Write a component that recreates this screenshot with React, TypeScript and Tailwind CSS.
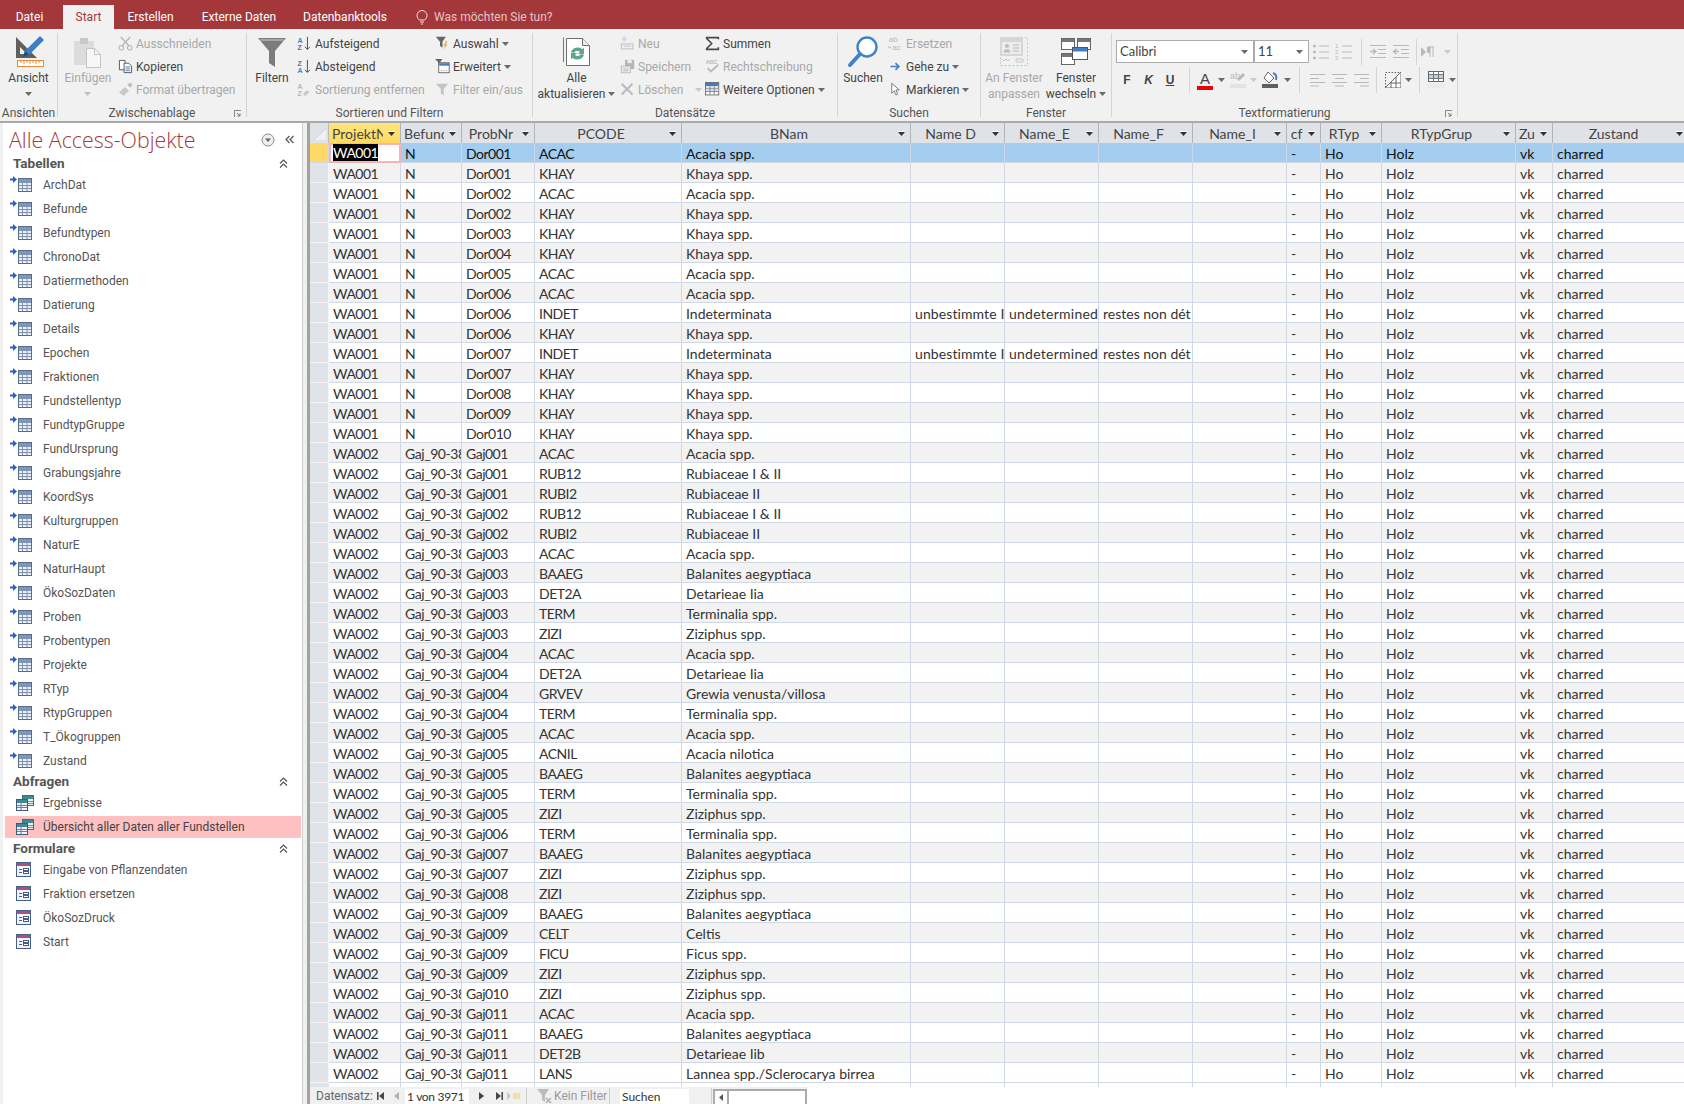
import React from "react";

const S = ({ w = 16, h = 16, vb, children }: { w?: number; h?: number; vb?: string; children: React.ReactNode }) => (
  <svg width={w} height={h} viewBox={vb ?? `0 0 ${w} ${h}`} className="shrink-0 block">{children}</svg>
);

const Caret = ({ c = "#6a6a6a" }: { c?: string }) => (
  <svg width="7" height="4" viewBox="0 0 7 4" className="inline-block shrink-0"><polygon points="0,0 7,0 3.5,4" fill={c} /></svg>
);

const HeadArrow = () => (
  <svg width="7" height="5" viewBox="0 0 7 5" className="block"><rect x="0" y="0" width="7" height="1" fill="#ffffff" /><polygon points="0,1 7,1 3.5,5" fill="#333333" /></svg>
);

const D = "#b9b9b9";

const AnsichtIcon = () => (
  <S w={34} h={34}>
    <path d="M4 2 L4 23 L25 23 Z M8 12 L8 19 L15 19 Z" fill="#5f5f5f" fillRule="evenodd" />
    <polygon points="28,1 32,5 17,20 11,22 13,16" fill="#3a7fc1" />
    <polygon points="13,16 17,20 11,22" fill="#1f4e79" />
    <rect x="5.5" y="25.5" width="26" height="6" fill="#fff" stroke="#e8893b" />
    <path d="M9 26v2M12 26v3M15 26v2M18 26v3M21 26v2M24 26v3M27 26v2" stroke="#e8893b" />
  </S>
);
const PasteIcon = () => (
  <S w={32} h={32}>
    <rect x="2" y="5" width="20" height="24" fill="#dcdcdc" />
    <rect x="8" y="2" width="8" height="6" fill="#c8c8c8" />
    <path d="M14.5 12.5h8l6 6v13h-14z" fill="#f7f7f7" stroke="#c4c4c4" />
    <path d="M22.5 12.5v6h6" fill="none" stroke="#c4c4c4" />
  </S>
);
const Scissors = () => (
  <S>
    <path d="M3 1l9 10M13 1L4 11" stroke={D} strokeWidth="1.6" fill="none" />
    <circle cx="3.5" cy="12.5" r="2.4" fill="none" stroke={D} strokeWidth="1.2" />
    <circle cx="12.5" cy="12.5" r="2.4" fill="none" stroke={D} strokeWidth="1.2" />
  </S>
);
const CopyIcon = () => (
  <S>
    <path d="M1.5 1.5h6v10h-6z" fill="#fff" stroke="#555" />
    <path d="M6.5 4.5h5l3 3v7h-8z" fill="#fff" stroke="#555" />
    <path d="M8 8.5h5M8 10.5h5M8 12.5h5" stroke="#4a7fb5" />
  </S>
);
const BrushIcon = () => (
  <S>
    <polygon points="1,11 8,5 12,9 6,15" fill="#c9c9c9" />
    <polygon points="10,3 13,0.5 15.5,3 13,6" fill="#bdbdbd" />
    <path d="M8 5l4 4" stroke="#fff" />
  </S>
);
const BigFunnel = () => (
  <S w={30} h={32}>
    <polygon points="1,2 29,2 18,15 18,31 12,27 12,15" fill="#7c7c7c" />
    <polygon points="3,3 27,3 26,5 4,5" fill="#a6a6a6" />
  </S>
);
const AZ = ({ a, b, dim }: { a: string; b: string; dim?: boolean }) => (
  <S w={18} h={18}>
    <text x="0.5" y="8" fontSize="8.5" fontWeight="700" fontFamily="'Liberation Sans', sans-serif" fill={dim ? D : a === "A" ? "#3f88c5" : "#8359a8"}>{a}</text>
    <text x="0.5" y="17" fontSize="8.5" fontWeight="700" fontFamily="'Liberation Sans', sans-serif" fill={dim ? D : a === "A" ? "#8359a8" : "#3f88c5"}>{b}</text>
    {!dim && <path d="M12.5 1v15M9.5 13l3 3 3-3" stroke="#444" strokeWidth="1.1" fill="none" />}
    {dim && <polygon points="7,14 12,10 15,12 10,17" fill="#c9c9c9" />}
  </S>
);
const FunnelBolt = () => (
  <S w={18} h={18}>
    <polygon points="1,1 13,1 9,7 9,14 6,12 6,7" fill="#666" />
    <polygon points="13,6 10,12 12,12 10,17 15,10 13,10 15,6" fill="#eab257" />
  </S>
);
const FunnelWin = () => (
  <S w={18} h={18}>
    <polygon points="0,0 9,0 6,4 6,8 4,7 4,4" fill="#666" />
    <rect x="4.5" y="4.5" width="12.5" height="12" fill="#fff" stroke="#555" />
    <rect x="5" y="5" width="12" height="3" fill="#3f7fc1" />
    <path d="M7 14h1M10 14h1M13 14h1" stroke="#555" />
  </S>
);
const FunnelDim = () => (
  <S w={18} h={18}>
    <polygon points="1,2 16,2 10.5,8 10.5,16 7,14 7,8" fill="#c4c4c4" />
  </S>
);
const RefreshDoc = () => (
  <S w={30} h={32}>
    <path d="M1.5 1.5V26" stroke="#777" />
    <path d="M4.5 2.5h16l7 7v20h-23z" fill="#fff" stroke="#6e6e6e" />
    <path d="M20.5 2.5v7h7" fill="#eee" stroke="#6e6e6e" />
    <path d="M9 16a7 7 0 0 1 11-3l2-1v6h-6l2-2a4 4 0 0 0-6 1z" fill="#5fa68a" />
    <path d="M22 19a7 7 0 0 1-11 3l-2 1v-6h6l-2 2a4 4 0 0 0 6-1z" fill="#5fa68a" />
  </S>
);
const NewIcon = () => (
  <S w={18} h={18}>
    <path d="M5 0v7M2 3.500h7M3 1l4 5M7 1L3 6" stroke="#d0d0d0" />
    <rect x="1.500" y="9.500" width="14" height="6" fill="#f0f0f0" stroke={D} />
    <path d="M4 12h9" stroke={D} />
  </S>
);
const SaveIcon = () => (
  <S w={18} h={18}>
    <rect x="6" y="1" width="11" height="11" fill="#b6b6b6" />
    <rect x="9" y="1" width="5" height="4" fill="#eee" />
    <rect x="1.500" y="8.500" width="11" height="8" fill="#e8e8e8" stroke={D} />
    <path d="M4 12h6M4 14h6" stroke={D} />
  </S>
);
const DelIcon = () => (
  <S w={18} h={18}>
    <path d="M2 2l13 13M15 2L2 15" stroke="#bcbcbc" strokeWidth="2.6" />
  </S>
);
const Sigma = () => (
  <S w={18} h={18}>
    <path d="M16 4V2H2v1l6 6-6 6v1h14v-2.500" fill="none" stroke="#4a4a4a" strokeWidth="2" />
  </S>
);
const Spell = () => (
  <S w={18} h={18}>
    <text x="1" y="6" fontSize="6.500" fontWeight="700" fontFamily="'Liberation Sans', sans-serif" fill={D}>ABC</text>
    <path d="M3 11l4 4 9-8" fill="none" stroke={D} strokeWidth="2.400" />
  </S>
);
const TableBlue = () => (
  <S w={18} h={18}>
    <rect x="0.500" y="0.500" width="16" height="15" fill="#fff" stroke="#5a5a5a" />
    <rect x="1" y="1" width="15" height="4" fill="#3f7fc1" />
    <rect x="1" y="8" width="15" height="3" fill="#cfdff0" />
    <path d="M1 7.500h15M1 11.500h15M6 5v10M11 5v10" stroke="#777" />
  </S>
);
const Magnifier = () => (
  <S w={32} h={34}>
    <circle cx="20" cy="12" r="9.500" fill="#fff" stroke="#3f85c4" strokeWidth="2.400" />
    <path d="M13 19L3 30" stroke="#3f85c4" strokeWidth="4" strokeLinecap="round" />
  </S>
);
const Replace = () => (
  <S w={18} h={18}>
    <text x="1" y="7.500" fontSize="9.500" fontFamily="'Liberation Sans', sans-serif" fill={D}>ab</text>
    <text x="5" y="16.500" fontSize="9.500" fontFamily="'Liberation Sans', sans-serif" fill={D}>ac</text>
    <path d="M1 12v2h3" stroke={D} fill="none" />
  </S>
);
const GoTo = () => (
  <S w={18} h={18}>
    <path d="M3 9h10M9 5l4 4-4 4" stroke="#3f85c4" strokeWidth="2" fill="none" />
  </S>
);
const CursorI = () => (
  <S w={18} h={18}>
    <path d="M4.500 1.500v12l3-3 2 5 2-1-2-5h4z" fill="#fff" stroke="#666" />
  </S>
);
const FitWin = () => (
  <S w={30} h={32}>
    <rect x="1.500" y="1.500" width="27" height="28" fill="none" stroke="#c5c5c5" strokeDasharray="2 2" />
    <rect x="1" y="1" width="23" height="19" fill="#d6d6d6" />
    <rect x="3" y="6" width="19" height="12" fill="#ececec" />
    <circle cx="8" cy="10" r="2" fill="#bcbcbc" />
    <path d="M5 16c0-3 6-3 6 0zM14 9h6M14 12h6M14 15h6" fill="#bcbcbc" stroke="#bcbcbc" />
    <path d="M3 23l2 2 2-2 2 2 2-2M17 23h7v3h-7z" stroke="#c5c5c5" fill="none" />
  </S>
);
const SwitchWin = () => (
  <S w={30} h={28}>
    <rect x="0.500" y="0.500" width="13" height="11" fill="#fff" stroke="#666" />
    <rect x="1" y="1" width="12" height="3" fill="#777" />
    <rect x="16.500" y="0.500" width="13" height="11" fill="#fff" stroke="#666" />
    <rect x="17" y="1" width="12" height="3" fill="#777" />
    <rect x="0.500" y="15.500" width="13" height="11" fill="#fff" stroke="#666" />
    <rect x="1" y="16" width="12" height="3" fill="#777" />
    <rect x="11.500" y="9.500" width="15" height="12" fill="#fff" stroke="#555" />
    <rect x="12" y="10" width="14" height="3.500" fill="#3f7fc1" />
  </S>
);
const ListIco = ({ num }: { num?: boolean }) => (
  <S w={18} h={18}>
    {[3, 9, 15].map((y, i) => (
      <g key={y}>
        {num ? <text x="0" y={y + 2} fontSize="6" fontFamily="'Liberation Sans', sans-serif" fill={D}>{i + 1}</text> : <circle cx="2.500" cy={y} r="1.500" fill={D} />}
        <path d={`M7 ${y}h10`} stroke={D} strokeWidth="1" />
      </g>
    ))}
  </S>
);
const IndentIco = ({ out }: { out?: boolean }) => (
  <S w={18} h={16}>
    <path d="M1 1.500h16M9 5.500h8M9 9.500h8M1 13.500h16" stroke={D} />
    <path d={out ? "M7 7.500H2M4.500 5l-3 2.500 3 2.500" : "M1 7.500h5M4 5l3 2.500L4 10"} stroke={D} strokeWidth="1.400" fill="none" />
  </S>
);
const AlignIco = ({ k }: { k: "l" | "c" | "r" }) => {
  const x = k === "l" ? [1, 1] : k === "c" ? [1, 4] : [1, 7];
  return (
    <S w={16} h={14}>
      {[1.5, 5.5, 9.5, 13].map((y, i) => (
        <path key={y} d={`M${i % 2 ? x[1] : x[0]} ${y}h${i % 2 ? 9 : 15}`} stroke={D} />
      ))}
    </S>
  );
};

const LinkedTable = () => (
  <div className="relative w-[22px] h-[18px] shrink-0">
    <svg width="7" height="7" viewBox="0 0 7 7" className="absolute left-0 top-0"><polygon points="0,2.500 3,2.500 3,0 7,3.500 3,7 3,4.500 0,4.500" fill="#2b5fc4" /></svg>
    <svg width="14" height="14" viewBox="0 0 14 14" className="absolute left-[8px] top-[2px]">
      <rect x="0.500" y="0.500" width="13" height="13" fill="#e9eff7" stroke="#566d8f" />
      <rect x="1" y="1" width="12" height="3" fill="#7f96b8" />
      <path d="M1 4.500h12M1 7.500h12M1 10.500h12M4.500 4v9M9 4v9" stroke="#7f93b0" />
    </svg>
  </div>
);
const QueryIco = () => (
  <S w={18} h={16}>
    <rect x="6.500" y="0.500" width="11" height="10" fill="#eef4f5" stroke="#3d6d7d" />
    <rect x="7" y="1" width="10" height="3" fill="#3f8a94" />
    <path d="M7 6.500h10M7 8.500h10M11 4v6" stroke="#6a95a0" />
    <rect x="0.500" y="4.500" width="11" height="11" fill="#f3f6fa" stroke="#3e5a80" />
    <rect x="1" y="5" width="10" height="3" fill="#3f8a94" />
    <path d="M1 10.500h10M1 12.500h10M5 8v7" stroke="#6a7f9a" />
  </S>
);
const FormIco = () => (
  <S w={16} h={16}>
    <rect x="0.500" y="0.500" width="14" height="14" fill="#f1f4f9" stroke="#46608a" />
    <rect x="1" y="1" width="13" height="3" fill="#b04f7f" />
    <path d="M3 7.500h3M3 10.500h3" stroke="#46608a" />
    <rect x="7.500" y="6.500" width="5" height="2" fill="#fff" stroke="#46608a" />
    <rect x="7.500" y="9.500" width="5" height="2" fill="#fff" stroke="#46608a" />
  </S>
);
const CollapseUp = () => (
  <svg width="11" height="11" viewBox="0 0 11 11"><path d="M2 5.500l3.500-3.500L9 5.500M2 9.500L5.500 6 9 9.500" fill="none" stroke="#555" strokeWidth="1.200" /></svg>
);
const Launcher = () => (
  <svg width="8" height="8" viewBox="0 0 8 8"><path d="M0.500 7V.5H7" fill="none" stroke="#888" /><path d="M3 3l3 3M6 3.500V6H3.500" fill="none" stroke="#777" /></svg>
);

const Big = ({ icon, l1, l2, dim, caret, caret1, w }: { icon: React.ReactNode; l1: string; l2?: string; dim?: boolean; caret?: boolean; caret1?: boolean; w: string }) => (
  <div className={`${w} shrink-0 flex flex-col items-center pt-[3px]`}>
    <div className="h-[31px] flex items-center justify-center">{icon}</div>
    <div className={`mt-[3px] text-center leading-[16px] whitespace-nowrap ${dim ? "text-[#a8a8a8]" : "text-[#444444]"}`}>
      <div>{l1}</div>
      {l2 && (
        <div className="flex items-center justify-center gap-[3px]">
          {l2}
          {caret && <Caret />}
        </div>
      )}
      {caret1 && <div className="h-[16px] flex items-center justify-center"><Caret c={dim ? "#c0c0c0" : "#6a6a6a"} /></div>}
    </div>
  </div>
);
const Small = ({ icon, t, dim, caret, caretGap }: { icon: React.ReactNode; t: string; dim?: boolean; caret?: boolean; caretGap?: boolean }) => (
  <div className={`h-[23px] -translate-y-[1px] flex items-center whitespace-nowrap ${dim ? "text-[#a8a8a8]" : "text-[#444444]"}`}>
    <div className="w-[18px] shrink-0 flex items-center [&_svg]:w-[15px] [&_svg]:h-[15px]">{icon}</div>
    <span>{t}</span>
    {caret && <span className={`flex ${caretGap ? "ml-[12px]" : "ml-[3px]"}`}><Caret c={dim ? "#c8c8c8" : "#6a6a6a"} /></span>}
  </div>
);
const Group = ({ w, label, launcher, children }: { w: string; label: string; launcher?: boolean; children: React.ReactNode }) => (
  <div className={`${w} shrink-0 h-[84px] border-r border-[#d4d4d4] flex flex-col`}>
    <div className="h-[73px] shrink-0 flex">{children}</div>
    <div className="relative h-[14px] shrink-0 leading-[14px] text-center text-[#555555] whitespace-nowrap">
      {label}
      {launcher && <span className="absolute right-[4px] top-[4px]"><Launcher /></span>}
    </div>
  </div>
);
const Cb = ({ w, t }: { w: string; t: string }) => (
  <div className={`${w} h-[23px] bg-white border border-[#ababab] flex items-center justify-between pl-[3px] pr-[5px] shrink-0 text-[13px] text-[#444444]`} style={{ fontFamily: "Lato, sans-serif" }}>
    {t}
    <Caret />
  </div>
);
const Sep = () => <div className="w-[1px] h-[26px] bg-[#d4d4d4] shrink-0" />;

const tabelle = ["ArchDat", "Befunde", "Befundtypen", "ChronoDat", "Datiermethoden", "Datierung", "Details", "Epochen", "Fraktionen", "Fundstellentyp", "FundtypGruppe", "FundUrsprung", "Grabungsjahre", "KoordSys", "Kulturgruppen", "NaturE", "NaturHaupt", "ÖkoSozDaten", "Proben", "Probentypen", "Projekte", "RTyp", "RtypGruppen", "T_Ökogruppen", "Zustand"];
const formulare = ["Eingabe von Pflanzendaten", "Fraktion ersetzen", "ÖkoSozDruck", "Start"];

const names: Record<string, string> = {
  ACAC: "Acacia spp.", KHAY: "Khaya spp.", INDET: "Indeterminata", RUB12: "Rubiaceae I & II", RUBI2: "Rubiaceae II",
  BAAEG: "Balanites aegyptiaca", DET2A: "Detarieae Iia", TERM: "Terminalia spp.", ZIZI: "Ziziphus spp.", GRVEV: "Grewia venusta/villosa",
  ACNIL: "Acacia nilotica", CELT: "Celtis", FICU: "Ficus spp.", DET2B: "Detarieae Iib", LANS: "Lannea spp./Sclerocarya birrea",
};
const raw = "Dor001 ACAC,Dor001 KHAY,Dor002 ACAC,Dor002 KHAY,Dor003 KHAY,Dor004 KHAY,Dor005 ACAC,Dor006 ACAC,Dor006 INDET,Dor006 KHAY,Dor007 INDET,Dor007 KHAY,Dor008 KHAY,Dor009 KHAY,Dor010 KHAY,Gaj001 ACAC,Gaj001 RUB12,Gaj001 RUBI2,Gaj002 RUB12,Gaj002 RUBI2,Gaj003 ACAC,Gaj003 BAAEG,Gaj003 DET2A,Gaj003 TERM,Gaj003 ZIZI,Gaj004 ACAC,Gaj004 DET2A,Gaj004 GRVEV,Gaj004 TERM,Gaj005 ACAC,Gaj005 ACNIL,Gaj005 BAAEG,Gaj005 TERM,Gaj005 ZIZI,Gaj006 TERM,Gaj007 BAAEG,Gaj007 ZIZI,Gaj008 ZIZI,Gaj009 BAAEG,Gaj009 CELT,Gaj009 FICU,Gaj009 ZIZI,Gaj010 ZIZI,Gaj011 ACAC,Gaj011 BAAEG,Gaj011 DET2B,Gaj011 LANS".split(",");

const grid = "grid grid-cols-[19px_72px_61px_73px_147px_229px_94px_94px_94px_94px_34px_61px_134px_37px_136px]";
const headers = ["ProjektNr", "Befund", "ProbNr", "PCODE", "BNam", "Name D", "Name_E", "Name_F", "Name_I", "cf", "RTyp", "RTypGrup", "Zu:", "Zustand"];

const Cell = ({ t, cls = "" }: { t?: string; cls?: string }) => (
  <div className={`h-[20px] border-r border-b border-[#d0d7e5] pl-[4px] pt-[1px] leading-[19px] overflow-hidden whitespace-nowrap ${cls}`}>{t}</div>
);

const Row = ({ i, r }: { i: number; r: string }) => {
  const [prob, code] = r.split(" ");
  const sel = i === 0;
  const wa = prob.startsWith("Dor");
  const ind = code === "INDET";
  const bg = sel ? "bg-[#a4cdf0] text-[#111111]" : i % 2 ? "bg-[#f2f2f2] text-[#333333]" : "bg-white text-[#333333]";
  return (
    <div className={`${grid} ${bg}`}>
      <div className={`h-[20px] border-r border-b ${sel ? "bg-[#ffd966] border-[#d0d7e5]" : "bg-[#e0e3e8] border-[#f4f5f7]"}`} />
      {sel ? (
        <div className="h-[20px] border-2 border-[#f5b3b6] bg-white pl-[2px] text-white leading-[16px] tracking-[-0.5px]">
          <span className="bg-black">WA001</span>
        </div>
      ) : (
        <Cell t={wa ? "WA001" : "WA002"} cls="tracking-[-0.5px]" />
      )}
      <Cell t={wa ? "N" : "Gaj_90-38"} cls="tracking-[-0.45px]" />
      <Cell t={prob} cls="tracking-[-0.5px]" />
      <Cell t={code} cls="tracking-[-0.5px]" />
      <Cell t={names[code]} />
      <Cell t={ind ? "unbestimmte I" : ""} cls="tracking-[0.1px]" />
      <Cell t={ind ? "undetermined" : ""} cls="tracking-[0.25px]" />
      <Cell t={ind ? "restes non dét" : ""} />
      <Cell />
      <Cell t="-" />
      <Cell t="Ho" />
      <Cell t="Holz" />
      <Cell t="vk" />
      <Cell t="charred" />
    </div>
  );
};

export default function App() {
  return (
    <div className="w-[1684px] h-[1104px] overflow-hidden flex flex-col bg-[#f0f0f0] text-[12px] text-[#444444]" style={{ fontFamily: "Roboto, sans-serif" }}>
      {/* tab strip */}
      <div className="h-[29px] bg-[#a4373a] flex items-end shrink-0 text-white">
        <div className="w-[63px] h-[24px] pr-[4px] flex items-center justify-center">Datei</div>
        <div className="w-[51px] h-[24px] bg-[#f1f1f1] text-[#a4373a] flex items-center justify-center">Start</div>
        <div className="w-[73px] h-[24px] flex items-center justify-center">Erstellen</div>
        <div className="w-[100px] h-[24px] pl-[4px] flex items-center justify-center">Externe Daten</div>
        <div className="w-[116px] h-[24px] flex items-center justify-center">Datenbanktools</div>
        <div className="h-[24px] ml-[13px] flex items-center gap-[6px] text-[#e4c4c5]">
          <svg width="12" height="15" viewBox="0 0 12 15"><path d="M3.500 10C2 8.500 1 7.500 1 5.500a5 5 0 0 1 10 0C11 7.500 10 8.500 8.500 10zM4 12h4M5 14h2" fill="none" stroke="#f3e3e3" /></svg>
          Was möchten Sie tun?
        </div>
      </div>

      {/* ribbon */}
      <div className="h-[94px] shrink-0 bg-[#f1f1f1] border-b-2 border-[#a9a9a9] pt-[4px] flex">
        <Group w="w-[58px]" label="Ansichten">
          <Big w="w-[57px]" icon={<AnsichtIcon />} l1="Ansicht" caret1 />
        </Group>
        <Group w="w-[189px]" label="Zwischenablage" launcher>
          <Big w="w-[60px]" icon={<PasteIcon />} l1="Einfügen" dim caret1 />
          <div>
            <Small icon={<Scissors />} t="Ausschneiden" dim />
            <Small icon={<CopyIcon />} t="Kopieren" />
            <Small icon={<BrushIcon />} t="Format übertragen" dim />
          </div>
        </Group>
        <Group w="w-[286px]" label="Sortieren und Filtern">
          <Big w="w-[50px]" icon={<BigFunnel />} l1="Filtern" />
          <div className="w-[138px]">
            <Small icon={<AZ a="A" b="Z" />} t="Aufsteigend" />
            <Small icon={<AZ a="Z" b="A" />} t="Absteigend" />
            <Small icon={<AZ a="A" b="Z" dim />} t="Sortierung entfernen" dim />
          </div>
          <div>
            <Small icon={<FunnelBolt />} t="Auswahl" caret />
            <Small icon={<FunnelWin />} t="Erweitert" caret />
            <Small icon={<FunnelDim />} t="Filter ein/aus" dim />
          </div>
        </Group>
        <Group w="w-[305px]" label="Datensätze">
          <Big w="w-[87px]" icon={<RefreshDoc />} l1="Alle" l2="aktualisieren" caret />
          <div className="w-[85px]">
            <Small icon={<NewIcon />} t="Neu" dim />
            <Small icon={<SaveIcon />} t="Speichern" dim />
            <Small icon={<DelIcon />} t="Löschen" dim caret caretGap />
          </div>
          <div>
            <Small icon={<Sigma />} t="Summen" />
            <Small icon={<Spell />} t="Rechtschreibung" dim />
            <Small icon={<TableBlue />} t="Weitere Optionen" caret />
          </div>
        </Group>
        <Group w="w-[143px]" label="Suchen">
          <Big w="w-[50px]" icon={<Magnifier />} l1="Suchen" />
          <div>
            <Small icon={<Replace />} t="Ersetzen" dim />
            <Small icon={<GoTo />} t="Gehe zu" caret />
            <Small icon={<CursorI />} t="Markieren" caret />
          </div>
        </Group>
        <Group w="w-[131px]" label="Fenster">
          <Big w="w-[66px]" icon={<FitWin />} l1="An Fenster" l2="anpassen" dim />
          <Big w="w-[58px]" icon={<SwitchWin />} l1="Fenster" l2="wechseln" caret />
        </Group>
        <Group w="w-[346px]" label="Textformatierung" launcher>
          <div className="pl-[4px] pt-[7px]">
            <div className="flex items-center h-[23px]">
              <Cb w="w-[138px]" t="Calibri" />
              <Cb w="w-[55px]" t="11" />
              <div className="w-[24px] flex justify-center"><ListIco /></div>
              <div className="w-[22px] flex justify-center"><ListIco num /></div>
              <div className="w-[6px]" />
              <Sep />
              <div className="w-[4px]" />
              <div className="w-[24px] flex justify-center"><IndentIco /></div>
              <div className="w-[22px] flex justify-center"><IndentIco out /></div>
              <div className="w-[4px]" />
              <Sep />
              <div className="w-[22px] flex justify-center"><S w={14} h={12}><polygon points="0,1 5,6 0,11" fill={D} /><path d="M6 1h7M9 1v10M12 1v10M9 1a3 3 0 0 0 0 6" stroke={D} fill={D} /></S></div>
              <div className="w-[16px] flex justify-center"><Caret c="#c8c8c8" /></div>
            </div>
            <div className="flex items-center h-[26px] mt-[4px] text-[#444444] font-bold">
              <div className="w-[22px] text-center" style={{ fontFamily: "'Liberation Sans', sans-serif" }}>F</div>
              <div className="w-[21px] text-center italic" style={{ fontFamily: "'Liberation Sans', sans-serif" }}>K</div>
              <div className="w-[22px] text-center underline" style={{ fontFamily: "'Liberation Sans', sans-serif" }}>U</div>
              <div className="w-[8px]" />
              <Sep />
              <div className="w-[4px]" />
              <div className="w-[22px] flex flex-col items-center leading-[15px] text-[15px] font-normal" style={{ fontFamily: "'Liberation Sans', sans-serif" }}>
                A
                <div className="w-[16px] h-[4px] bg-[#f00000]" />
              </div>
              <div className="w-[11px] flex justify-center"><Caret /></div>
              <div className="w-[21px] flex justify-center"><S w={16} h={18}><text x="0" y="8" fontSize="9" fontWeight="400" fill={D} fontFamily="'Liberation Sans', sans-serif">ab</text><path d="M8 9l6-6" stroke={D} strokeWidth="3" /><rect x="0" y="13" width="16" height="4" fill="#e5e0e8" /></S></div>
              <div className="w-[11px] flex justify-center"><Caret c="#c8c8c8" /></div>
              <div className="w-[23px] flex justify-center"><S w={17} h={18}><path d="M6 1l6 6-5 5-5-5z" fill="#fff" stroke="#666" /><path d="M11 2c3 1 4 3 3 7" fill="none" stroke="#3f7fc1" strokeWidth="2" /><rect x="0" y="13" width="16" height="4" fill="#5f5f5f" /></S></div>
              <div className="w-[10px] flex justify-center"><Caret /></div>
              <div className="w-[7px]" />
              <Sep />
              <div className="w-[6px]" />
              <div className="w-[22px] flex justify-center"><AlignIco k="l" /></div>
              <div className="w-[22px] flex justify-center"><AlignIco k="c" /></div>
              <div className="w-[22px] flex justify-center"><AlignIco k="r" /></div>
              <div className="w-[4px]" />
              <Sep />
              <div className="w-[8px]" />
              <div className="w-[16px] flex justify-center"><S w={16} h={16}><rect x="0.500" y="0.500" width="15" height="15" fill="none" stroke="#666" strokeDasharray="1.500 1.500" /><path d="M0 16L16 0v16zM6 10v6M11 5v11M6 11h10" fill="#fff" stroke="#666" /></S></div>
              <div className="w-[14px] flex justify-center"><Caret /></div>
              <div className="w-[4px]" />
              <Sep />
              <div className="w-[8px]" />
              <div className="w-[16px] flex justify-center"><S w={16} h={18}><rect x="0.500" y="0.500" width="15" height="10" fill="#fff" stroke="#666" /><rect x="1" y="4" width="14" height="3" fill="#b9cfe6" /><path d="M1 3.500h14M1 7.500h14M5.500 1v10M10.500 1v10" stroke="#777" /><rect x="0" y="13" width="16" height="4" fill="#ebebeb" /></S></div>
              <div className="w-[16px] flex justify-center"><Caret /></div>
            </div>
          </div>
        </Group>
      </div>

      {/* body */}
      <div className="flex-1 min-h-0 flex pl-[3px]">
        <div className="w-[299px] shrink-0 bg-white flex flex-col">
          <div className="h-[30px] flex items-center pl-[6px] pr-[7px] pt-[3px] text-[#a4373a] text-[21.4px] leading-[27px]" style={{ fontFamily: "'Open Sans', sans-serif", fontWeight: 300 }}>
            <span className="flex-1 whitespace-nowrap">Alle Access-Objekte</span>
            <svg width="14" height="14" viewBox="0 0 14 14" className="mr-[9px]"><circle cx="7" cy="7" r="6" fill="#eeeeee" stroke="#8a8a8a" /><polygon points="4,5.500 10,5.500 7,9" fill="#666" /></svg>
            <svg width="11" height="11" viewBox="0 0 11 11"><path d="M5.500 2L2 5.500 5.500 9M9.500 2L6 5.500 9.500 9" fill="none" stroke="#555" strokeWidth="1.200" /></svg>
          </div>
          <NavHead t="Tabellen" />
          {tabelle.map((t) => (
            <div key={t} className="h-[24px] flex items-center pl-[7px] gap-[11px] text-[#555555]">
              <LinkedTable />
              <span>{t}</span>
            </div>
          ))}
          <NavHead t="Abfragen" cls="-mt-[2px]" />
          <NavItem icon={<QueryIco />} t="Ergebnisse" />
          <div className="h-[24px] flex items-center">
            <div className="w-full h-[22px] bg-[#ffc0c1] ml-[2px] mr-[1px] pl-[11px] flex items-center gap-[9px] text-[#444444]">
              <QueryIco />
              <span>Übersicht aller Daten aller Fundstellen</span>
            </div>
          </div>
          <NavHead t="Formulare" cls="-mt-[1px]" />
          {formulare.map((t) => (
            <NavItem key={t} icon={<FormIco />} t={t} form />
          ))}
        </div>

        {/* splitter */}
        <div className="w-[8px] shrink-0 bg-[#f0f0f0] border-l border-[#cfcfcf] border-r-[3px] border-r-[#a2a2a2]" />

        {/* datasheet */}
        <div className="flex-1 min-w-0 flex flex-col bg-white overflow-hidden text-[14px]" style={{ fontFamily: "Lato, sans-serif" }}>
          <div className={`${grid} h-[20px] shrink-0 bg-[#dfe3e8] text-[#444444]`}>
            <div className="h-[20px] border-r border-[#b8bcc2] relative overflow-hidden">
              <svg width="14" height="14" viewBox="0 0 14 14" className="absolute right-[1px] bottom-[2px]"><polygon points="14,0 14,14 0,14" fill="#eef0f3" stroke="#cfd2d7" /></svg>
            </div>
            {headers.map((h, i) => (
              <div key={h} className={`h-[20px] flex items-center border-r border-[#b1b5ba] ${i === 0 ? "bg-linear-to-b from-[#ffe680] to-[#ffd95f]" : ""}`}>
                <span className="flex-1 min-w-0 overflow-hidden whitespace-nowrap text-center pl-[3px] leading-[19px]">{h}</span>
                <span className="w-[17px] shrink-0 flex justify-center"><HeadArrow /></span>
              </div>
            ))}
          </div>
          <div className="flex-1 min-h-0 overflow-hidden">
            {raw.map((r, i) => (
              <Row key={i} i={i} r={r} />
            ))}
            <div className={grid}>
              <div className="h-[20px] bg-[#e0e3e8]" />
              {headers.map((h) => <Cell key={h} />)}
            </div>
          </div>
          <div className="h-[17px] shrink-0 bg-[#f0f0f0] flex items-center text-[12px] text-[#666666]" style={{ fontFamily: "Roboto, sans-serif" }}>
            <span className="ml-[6px] w-[57px] whitespace-nowrap">Datensatz:</span>
            <span className="w-[16px] flex justify-center"><svg width="8" height="8" viewBox="0 0 8 8"><rect x="0" y="0" width="1.500" height="8" fill="#444" /><polygon points="7,0 7,8 2,4" fill="#444" /></svg></span>
            <span className="w-[16px] flex justify-center"><svg width="6" height="8" viewBox="0 0 6 8"><polygon points="5,0 5,8 0,4" fill="#b0b0b0" /></svg></span>
            <div className="w-[64px] h-[15px] self-end bg-white pl-[2px] leading-[15px] text-[#333333] text-[12px] tracking-[-0.3px] whitespace-nowrap" style={{ fontFamily: "Lato, sans-serif" }}>1 von 3971</div>
            <span className="w-[24px] flex justify-center"><svg width="6" height="8" viewBox="0 0 6 8"><polygon points="1,0 1,8 6,4" fill="#444" /></svg></span>
            <span className="w-[11px] flex justify-center"><svg width="8" height="8" viewBox="0 0 8 8"><polygon points="1,0 1,8 6,4" fill="#444" /><rect x="6.500" y="0" width="1.500" height="8" fill="#444" /></svg></span>
            <span className="w-[20px] flex justify-center"><svg width="14" height="8" viewBox="0 0 14 8"><polygon points="0,0 0,8 4,4" fill="#c8c8c8" /><rect x="6" y="1" width="7" height="6" fill="#f2dfa8" /></svg></span>
            <span className="w-[1px] h-[16px] ml-[2px] bg-[#cfcfcf]" />
            <span className="ml-[10px] w-[16px] flex"><svg width="16" height="16" viewBox="0 0 16 16"><polygon points="0,1 12,1 8,7 8,14 5,12 5,7" fill="#bcbcbc" /><path d="M9 10l5 5M14 10l-5 5" stroke="#b0b0b0" strokeWidth="1.500" /></svg></span>
            <span className="ml-[1px] w-[55px] text-[#9a9a9a] whitespace-nowrap">Kein Filter</span>
            <span className="w-[1px] h-[16px] bg-[#cfcfcf]" />
            <div className="ml-[10px] w-[69px] h-[15px] self-end bg-white pl-[2px] leading-[15px] text-[#333333] text-[12px]" style={{ fontFamily: "Lato, sans-serif" }}>Suchen</div>
            <span className="w-[1px] h-[16px] ml-[22px] bg-[#cfcfcf]" />
            <div className="ml-[1px] w-[94px] h-[15px] self-end border-2 border-b-0 border-[#ababab] bg-white flex">
              <div className="w-[14px] border-r-2 border-[#ababab] flex items-center justify-center"><svg width="4" height="7" viewBox="0 0 4 7"><polygon points="4,0 4,7 0,3.500" fill="#555" /></svg></div>
            </div>
            <div className="flex-1 self-stretch bg-white" />
          </div>
        </div>
      </div>
    </div>
  );
}

function NavHead({ t, cls = "" }: { t: string; cls?: string }) {
  return (
    <div className={`h-[20px] shrink-0 flex items-center pl-[10px] pr-[13px] justify-between text-[13.5px] font-bold text-[#555555] leading-[20px] ${cls}`}>
      <span>{t}</span>
      <CollapseUp />
    </div>
  );
}
function NavItem({ icon, t, form }: { icon: React.ReactNode; t: string; form?: boolean }) {
  return (
    <div className={`h-[24px] flex items-center pl-[13px] text-[#555555] ${form ? "gap-[11px]" : "gap-[9px]"}`}>
      {icon}
      <span>{t}</span>
    </div>
  );
}
